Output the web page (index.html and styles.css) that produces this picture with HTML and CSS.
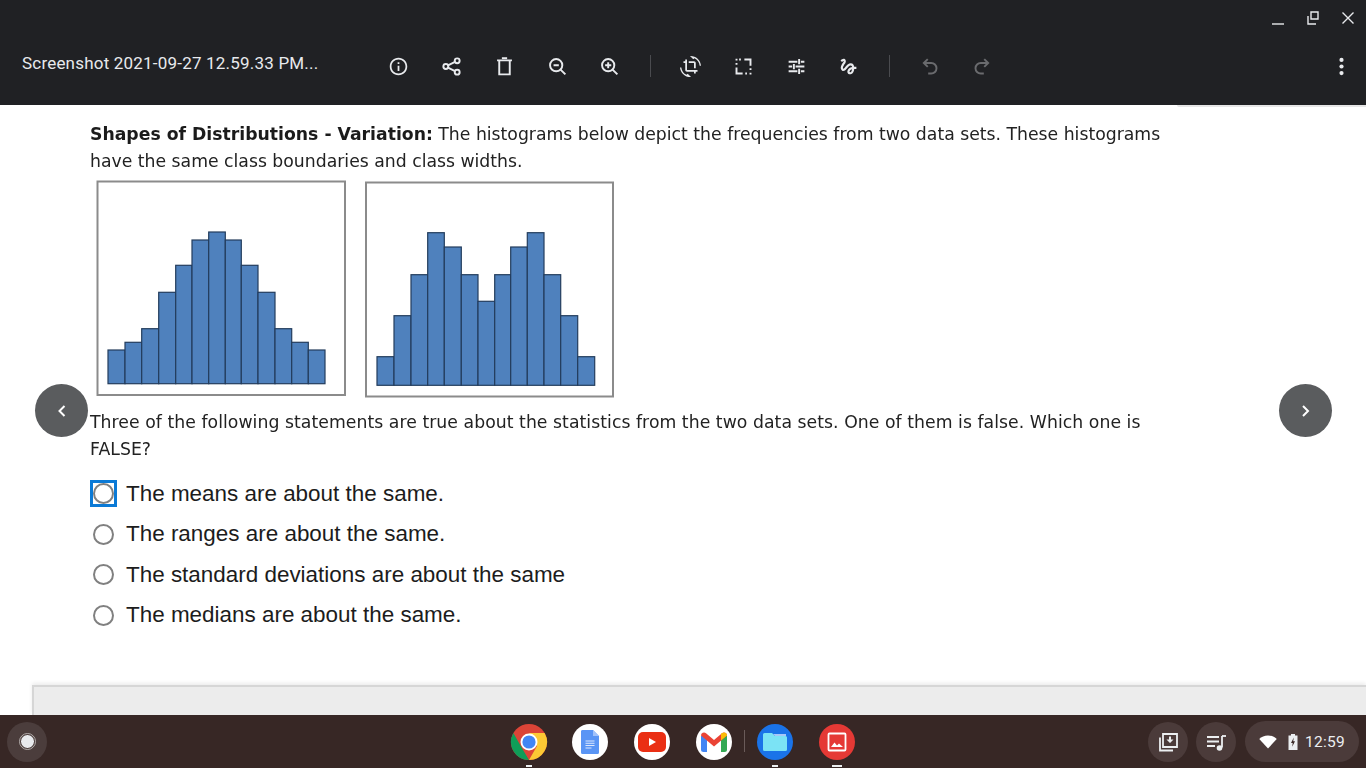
FILE: index.html
```
<!DOCTYPE html>
<html lang="en">
<head>
<meta charset="utf-8">
<title>Screenshot viewer</title>
<link rel="stylesheet" href="styles.css">
</head>
<body>
<header class="viewer-header">
  <div class="window-controls">
    <svg class="win-icon" viewBox="0 0 16 16"><path d="M2 14h12" /></svg>
    <svg class="win-icon" viewBox="0 0 16 16"><path d="M6 2h7v7H6zM3 6v8h8" /></svg>
    <svg class="win-icon" viewBox="0 0 16 16"><path d="M2.500 2.500l11 11M13.500 2.500l-11 11" /></svg>
  </div>
  <div class="toolbar">
    <div class="file-title">Screenshot 2021-09-27 12.59.33 PM...</div>
    <button class="tool"><svg viewBox="0 0 24 24"><path class="fill" d="M11 7h2v2h-2zm0 4h2v6h-2zm1-9C6.48 2 2 6.48 2 12s4.48 10 10 10 10-4.48 10-10S17.52 2 12 2zm0 18c-4.41 0-8-3.59-8-8s3.59-8 8-8 8 3.59 8 8-3.59 8-8 8z"/></svg></button>
    <button class="tool"><svg viewBox="0 0 24 24"><circle cx="18.500" cy="5.500" r="2.800"/><circle cx="5.500" cy="12" r="2.800"/><circle cx="18.500" cy="18.500" r="2.800"/><path d="M8 10.700l8-4M8 13.300l8 4"/></svg></button>
    <button class="tool"><svg viewBox="0 0 24 24"><path d="M3.500 5h17M6 5v16h12V5"/><path d="M9 2.500h6"/></svg></button>
    <button class="tool"><svg viewBox="0 0 24 24"><circle cx="10.500" cy="10.500" r="7"/><path d="M15.500 15.500l5.500 5.500M7.500 10.500h6"/></svg></button>
    <button class="tool"><svg viewBox="0 0 24 24"><circle cx="10.500" cy="10.500" r="7"/><path d="M15.500 15.500l5.500 5.500M7 10.500h7M10.500 7v7"/></svg></button>
    <span class="divider"></span>
    <button class="tool"><svg viewBox="0 0 24 24"><path class="fill" d="M7.47 21.49C4.2 19.93 1.86 16.76 1.5 13H0c.51 6.16 5.66 11 11.95 11 .23 0 .44-.02.66-.03L8.8 20.15l-1.33 1.34zM12.05 0c-.23 0-.44.02-.66.04l3.81 3.81 1.33-1.33C19.8 4.07 22.14 7.24 22.5 11H24c-.51-6.16-5.66-11-11.95-11zM16 14h2V8c0-1.11-.9-2-2-2h-6v2h6v6zm-8 2V4H6v2H4v2h2v8c0 1.1.89 2 2 2h8v2h2v-2h2v-2H8z"/></svg></button>
    <button class="tool"><svg viewBox="0 0 24 24"><path d="M13 4h7v7M4 13v7h7M4 3v2M4 8v2M7 4h2M20 14v2M20 19v2M14 20h2"/></svg></button>
    <button class="tool"><svg viewBox="0 0 24 24"><path d="M3 6.500h10M15 3.500v6M17 6.500h4M3 12h4M9 9v6M11 12h10M3 17.500h10M15 14.500v6M17 17.500h4"/></svg></button>
    <button class="tool"><svg viewBox="0 0 24 24"><path class="fill" d="M4.59 6.89c.7-.71 1.4-1.35 1.71-1.22.5.2 0 1.03-.3 1.52-.25.42-2.86 3.89-2.86 6.31 0 1.28.48 2.34 1.34 2.98.75.56 1.74.73 2.64.46 1.07-.31 1.95-1.4 3.06-2.77 1.21-1.49 2.83-3.44 4.08-3.44 1.63 0 1.65 1.01 1.76 1.79-3.78.64-5.38 3.67-5.38 5.37 0 1.7 1.44 3.09 3.21 3.09 1.63 0 4.29-1.33 4.69-6.1H21v-2.5h-2.47c-.15-1.65-1.09-4.2-4.03-4.2-2.25 0-4.18 1.91-4.94 2.84-.58.73-2.06 2.48-2.29 2.72-.25.3-.68.84-1.11.84-.45 0-.72-.83-.36-1.92.35-1.09 1.4-2.86 1.85-3.52.78-1.14 1.3-1.92 1.3-3.28C8.95 3.69 7.31 3 6.44 3 5.12 3 3.97 4 3.72 4.25c-.36.36-.66.66-.88.93l1.75 1.71zm9.29 11.66c-.31 0-.74-.26-.74-.72 0-.6.73-2.2 2.87-2.76-.3 2.69-1.43 3.48-2.13 3.48z"/></svg></button>
    <span class="divider"></span>
    <button class="tool is-disabled"><svg viewBox="0 0 24 24"><path d="M10 3.500L5.500 8l4.500 4.500"/><path d="M6 8h8a6 6 0 0 1 0 12h-3.500"/></svg></button>
    <button class="tool is-disabled"><svg viewBox="0 0 24 24"><path d="M14 3.500L18.500 8 14 12.500"/><path d="M18 8h-8a6 6 0 0 0 0 12h3.500"/></svg></button>
    <button class="tool tool-more"><svg viewBox="0 0 24 24"><circle class="fill" cx="12" cy="4.500" r="2.400"/><circle class="fill" cx="12" cy="12" r="2.400"/><circle class="fill" cx="12" cy="19.500" r="2.400"/></svg></button>
  </div>
</header>

<main class="page">
  <div class="top-edge"></div>
  <button class="nav nav-prev"><svg viewBox="0 0 24 24"><path d="M14.500 7l-5 5 5 5"/></svg></button>
  <button class="nav nav-next"><svg viewBox="0 0 24 24"><path d="M9 7l5 5-5 5"/></svg></button>

  <div class="question">
    <p class="prose"><strong>Shapes of Distributions - Variation:</strong> The histograms below depict the frequencies from two data sets. These histograms have the same class boundaries and class widths.</p>
    <div class="charts">
      <svg class="chart" viewBox="96 180 250 218">
        <rect class="frame" x="97.500" y="181.500" width="247.500" height="213.500"/>
        <g class="bars">
          <rect x="108" y="350" width="17" height="33.700"/>
          <rect x="125" y="342.300" width="16.700" height="41.400"/>
          <rect x="141.700" y="328.700" width="17" height="55"/>
          <rect x="158.700" y="292.300" width="17" height="91.400"/>
          <rect x="175.700" y="265.300" width="16.300" height="118.400"/>
          <rect x="192" y="240" width="16.700" height="143.700"/>
          <rect x="208.700" y="232" width="16.600" height="151.700"/>
          <rect x="225.300" y="240" width="16" height="143.700"/>
          <rect x="241.300" y="265.300" width="16.700" height="118.400"/>
          <rect x="258" y="292.300" width="17" height="91.400"/>
          <rect x="275" y="328.700" width="16.700" height="55"/>
          <rect x="291.700" y="342.300" width="16.600" height="41.400"/>
          <rect x="308.300" y="350" width="16.700" height="33.700"/>
        </g>
      </svg>
      <svg class="chart" viewBox="365 180 250 218">
        <rect class="frame" x="366" y="182.500" width="247" height="214"/>
        <g class="bars">
          <rect x="377" y="356.700" width="17" height="28.600"/>
          <rect x="394" y="315.700" width="17" height="69.600"/>
          <rect x="411" y="274.700" width="16.700" height="110.600"/>
          <rect x="427.700" y="232.700" width="16.600" height="152.600"/>
          <rect x="444.300" y="247" width="17" height="138.300"/>
          <rect x="461.300" y="274.700" width="16.700" height="110.600"/>
          <rect x="478" y="301.300" width="16.700" height="84"/>
          <rect x="494.700" y="274.700" width="16" height="110.600"/>
          <rect x="510.700" y="247" width="16.600" height="138.300"/>
          <rect x="527.300" y="232.700" width="16.700" height="152.600"/>
          <rect x="544" y="274.700" width="16.700" height="110.600"/>
          <rect x="560.700" y="315.700" width="17" height="69.600"/>
          <rect x="577.700" y="356.700" width="17" height="28.600"/>
        </g>
      </svg>
    </div>
    <p class="prose prose-second">Three of the following statements are true about the statistics from the two data sets. One of them is false. Which one is FALSE?</p>
    <div class="options">
      <label class="option"><span class="radio-box is-focused"><input type="radio" name="answer" class="radio"></span><span>The means are about the same.</span></label>
      <label class="option"><span class="radio-box"><input type="radio" name="answer" class="radio"></span><span>The ranges are about the same.</span></label>
      <label class="option"><span class="radio-box"><input type="radio" name="answer" class="radio"></span><span>The standard deviations are about the same</span></label>
      <label class="option"><span class="radio-box"><input type="radio" name="answer" class="radio"></span><span>The medians are about the same.</span></label>
    </div>
  </div>
  <div class="bottom-panel"></div>
</main>

<footer class="shelf">
  <div class="launcher"><span class="launcher-dot"></span></div>
  <div class="apps">
    <div class="app is-open"><svg viewBox="0 0 40 40">
      <circle cx="20" cy="20" r="18" fill="#db4437"/>
      <path d="M4.400 11L12 24.500 20 38A18 18 0 0 1 4.400 11z" fill="#0f9d58"/>
      <path d="M20 11h15.600A18 18 0 0 1 20 38l8-14z" fill="#fcc934"/>
      <circle cx="20" cy="20" r="8.500" fill="#fff"/>
      <circle cx="20" cy="20" r="6.600" fill="#4285f4"/>
    </svg></div>
    <div class="app"><svg viewBox="0 0 40 40">
      <circle cx="20" cy="20" r="18" fill="#fff"/>
      <path d="M13 8h10l6 6v16.500a1.500 1.500 0 0 1-1.500 1.500h-15a1.500 1.500 0 0 1-1.500-1.500V9.500A1.500 1.500 0 0 1 13 8z" fill="#5a95f5"/>
      <path d="M23 8l6 6h-6z" fill="#a1c2fa"/>
      <path d="M15.500 18.500h9v1h-9zM15.500 20.800h9v1h-9zM15.500 23.100h9v1h-9zM15.500 25.400h6v1h-6z" fill="#dbe7fd"/>
    </svg></div>
    <div class="app"><svg viewBox="0 0 40 40">
      <circle cx="20" cy="20" r="18" fill="#fff"/>
      <rect x="6" y="10" width="28" height="20" rx="5" fill="#ea2f14"/>
      <path d="M17 16l7 4-7 4z" fill="#fff"/>
    </svg></div>
    <div class="app"><svg viewBox="0 0 40 40">
      <circle cx="20" cy="20" r="18" fill="#fff"/>
      <path d="M7 14h6v16H9.500A2.500 2.500 0 0 1 7 27.500z" fill="#4285f4"/>
      <path d="M27 14h6v13.500a2.500 2.500 0 0 1-2.500 2.500H27z" fill="#34a853"/>
      <path d="M7 13.500a3 3 0 0 1 5-2.300l8 6.800 8-6.800a3 3 0 0 1 5 2.300L20 24.500z" fill="#ea4335"/>
      <path d="M27 11.500l1-.3a3 3 0 0 1 5 2.300l-6 5z" fill="#fbbc04"/>
    </svg></div>
    <span class="app-divider"></span>
    <div class="app is-open"><svg viewBox="0 0 40 40">
      <circle cx="20" cy="20" r="18" fill="#1a73e8"/>
      <path d="M8 12.500A1.500 1.500 0 0 1 9.500 11H17l3 3h10.500a1.500 1.500 0 0 1 1.500 1.500v12a1.500 1.500 0 0 1-1.500 1.500h-21A1.500 1.500 0 0 1 8 27.500z" fill="#7be3f5"/>
      <path d="M18 12h13v2H20z" fill="#a6c8f8"/>
    </svg></div>
    <div class="app is-open is-wide"><svg viewBox="0 0 40 40">
      <circle cx="20" cy="20" r="18" fill="#e53935"/>
      <rect x="11.500" y="11.500" width="17" height="17" rx="1" fill="none" stroke="#fff" stroke-width="1.800"/>
      <path d="M14 25l3.500-4.500 2.500 3 2-2 4 3.500z" fill="#fff"/>
    </svg></div>
  </div>
  <div class="tray">
    <button class="tray-btn"><svg viewBox="0 0 24 24"><path d="M7 4h14v13H7z"/><path class="fill" d="M13 6.500h2v3h2.500L14 13l-3.500-3.500H13z"/><path d="M4 7.500v13h13"/></svg></button>
    <button class="tray-btn"><svg viewBox="0 0 24 24"><path d="M3 7h12M3 11.500h12M3 16h8"/><path d="M18 6v11.500"/><path d="M18 6h4"/><circle class="fill" cx="15.500" cy="18" r="2.800"/></svg></button>
    <div class="status">
      <svg class="wifi" viewBox="0 0 20 16"><path d="M0 4.500C2.500 2 6 .5 10 .5s7.500 1.500 10 4L10 15.500z"/></svg>
      <svg class="battery" viewBox="0 0 10 16"><path d="M3 0h4v1.500h2.500V16H.5V1.500H3z" fill="#eceff1"/><path d="M5.800 3.500L3 9h1.700l-.5 3.800L7 7.300H5.200z" fill="#382725"/></svg>
      <span class="clock">12:59</span>
    </div>
  </div>
</footer>
</body>
</html>
```

FILE: styles.css
```
* { box-sizing: border-box; }
html, body { margin: 0; padding: 0; }
body {
  width: 1366px;
  height: 768px;
  overflow: hidden;
  display: flex;
  flex-direction: column;
  background: #fff;
  font-family: "Liberation Sans", Arial, sans-serif;
}
button { border: 0; padding: 0; background: none; }

/* Viewer header */
.viewer-header {
  height: 105px;
  flex: none;
  background: #202124;
  color: #e8eaed;
  display: flex;
  flex-direction: column;
  position: relative;
  z-index: 2;
}
.window-controls {
  height: 36px;
  display: flex;
  justify-content: flex-end;
  align-items: center;
  gap: 19px;
  padding-right: 10px;
}
.win-icon { width: 16px; height: 16px; fill: none; stroke: #e8eaed; stroke-width: 1.4; }
.toolbar {
  height: 60px;
  display: flex;
  align-items: center;
  padding-left: 22px;
}
.file-title {
  width: 350.6px;
  flex: none;
  font-family: Roboto, sans-serif;
  font-size: 17px;
  letter-spacing: 0.2px;
  margin-top: -6px;
  white-space: nowrap;
}
.tool { width: 52.75px; height: 24px; display: flex; justify-content: center; align-items: center; flex: none; }
.tool svg { width: 21px; height: 21px; fill: none; stroke: #e8eaed; stroke-width: 2.2; }
.tool svg .fill { fill: #e8eaed; stroke: none; }
.tool.is-disabled svg { stroke: #6a6b6e; }
.tool-more { margin-left: 306.5px; }
.divider { width: 1px; height: 22px; background: #4a4b4f; flex: none; margin: 0 13.5px; }

/* Page */
.page {
  flex: 1;
  position: relative;
  overflow: hidden;
  background: #fff;
}
.top-edge {
  position: absolute;
  top: 0;
  right: 0;
  width: 189px;
  height: 2px;
  background: #e6e6e6;
  border-bottom-left-radius: 3px;
}
.question { padding: 16px 0 0 90px; width: 1170px; }
.prose {
  margin: 0;
  font-family: "DejaVu Sans", Verdana, sans-serif;
  font-size: 17.25px;
  line-height: 27px;
  color: #222;
  filter: blur(0.3px);
}
.prose strong { color: #1b1b1b; }
.prose-second { margin-top: 11px; letter-spacing: 0.05px; }
.charts { display: flex; gap: 19px; margin: 5px 0 0 6px; }
.chart { width: 250px; height: 218px; flex: none; filter: blur(0.5px); }
.frame { fill: #fff; stroke: #8b8b8b; stroke-width: 2; }
.bars rect { fill: #4f81bd; stroke: #233c5c; stroke-width: 1.2; }

.options { margin-top: 10.5px; display: flex; flex-direction: column; }
.option {
  height: 40.5px;
  display: flex;
  align-items: center;
  gap: 9px;
  font-size: 22.45px;
  color: #1c1c1c;
}
.radio-box {
  width: 27px;
  height: 27px;
  flex: none;
  display: flex;
  align-items: center;
  justify-content: center;
  border: 3px solid transparent;
}
.radio-box.is-focused { border-color: #0b7ad6; }
.radio {
  appearance: none;
  -webkit-appearance: none;
  margin: 0;
  width: 21px;
  height: 21px;
  border-radius: 50%;
  border: 2px solid #808080;
  background: #fff;
  flex: none;
}

.bottom-panel {
  position: absolute;
  left: 32px;
  right: 0;
  bottom: 0;
  height: 30px;
  background: #ececec;
  border-top: 2px solid #d6d6d6;
  border-left: 2px solid #d6d6d6;
  box-shadow: 0 -2px 4px rgba(0,0,0,.08);
}
.nav {
  position: absolute;
  top: 279px;
  width: 53px;
  height: 53px;
  border-radius: 50%;
  background: #5a5c5e;
  display: flex;
  align-items: center;
  justify-content: center;
}
.nav svg { width: 24px; height: 24px; fill: none; stroke: #fff; stroke-width: 2; }
.nav-prev { left: 35px; }
.nav-next { right: 34px; }

/* Shelf */
.shelf {
  height: 53px;
  flex: none;
  background: #372725;
  display: flex;
  align-items: center;
  position: relative;
  padding: 0 7px;
}
.launcher {
  width: 40px;
  height: 40px;
  border-radius: 50%;
  background: #4b3d3c;
  display: flex;
  align-items: center;
  justify-content: center;
}
.launcher-dot {
  width: 15px;
  height: 15px;
  border-radius: 50%;
  background: #e8eaed;
  border: 1px solid #372725;
  outline: 1.5px solid #b3aeac;
}
.apps {
  position: absolute;
  left: 498px;
  top: 0;
  height: 53px;
  display: flex;
}
.app { width: 61.6px; height: 53px; position: relative; display: flex; justify-content: center; padding-top: 7px; }
.app svg { width: 40px; height: 40px; }
.is-open::after {
  content: "";
  position: absolute;
  left: 28px;
  bottom: 1px;
  width: 6px;
  height: 2px;
  background: #eceff1;
}
.is-wide::after { left: 26px; width: 10px; }
.app-divider { width: 1px; height: 22px; margin: 15px -1px 0 0; background: #6a5b59; flex: none; }
.tray {
  margin-left: auto;
  display: flex;
  align-items: center;
  gap: 8px;
}
.tray-btn {
  width: 40px;
  height: 40px;
  border-radius: 50%;
  background: #4b3b3a;
  display: flex;
  align-items: center;
  justify-content: center;
}
.tray-btn svg { width: 24px; height: 24px; fill: none; stroke: #eceff1; stroke-width: 1.8; }
.tray-btn svg .fill { fill: #eceff1; stroke: none; }
.status {
  width: 114px;
  height: 41px;
  border-radius: 21px;
  background: #4b3b3a;
  margin-left: 1px;
  display: flex;
  align-items: center;
  padding-left: 14px;
  color: #eceff1;
}
.wifi { width: 18px; height: 14px; fill: #fff; }
.battery { width: 10px; height: 16px; margin-left: 11px; }
.clock { font-family: Roboto, sans-serif; font-size: 15.5px; margin-left: 7px; letter-spacing: .3px; }
```
